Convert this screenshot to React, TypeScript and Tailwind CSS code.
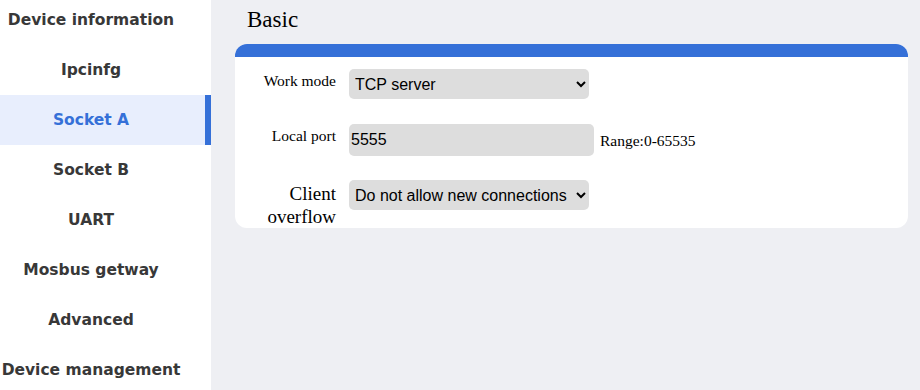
import { useState } from "react";

const menu = [
  "Device information",
  "Ipcinfg",
  "Socket A",
  "Socket B",
  "UART",
  "Mosbus getway",
  "Advanced",
  "Device management",
];

export default function App() {
  const [active, setActive] = useState("Socket A");

  return (
    <div className="flex h-[390px] w-[920px] overflow-hidden bg-[#eeeff3]">
      <aside className="w-[211px] shrink-0 bg-white">
        <ul className="-mt-[5px]">
          {menu.map((item) => (
            <li
              key={item}
              onClick={() => setActive(item)}
              className={
                item === active
                  ? "flex h-[50px] cursor-pointer items-center justify-center whitespace-nowrap border-r-[6px] border-[#3570d8] bg-[#e8eefd] pr-[23px] pt-[2px] font-['DejaVu_Sans',sans-serif] text-[15.5px] font-bold text-[#3570d8]"
                  : "flex h-[50px] cursor-pointer items-center justify-center whitespace-nowrap pr-[29px] pt-[2px] font-['DejaVu_Sans',sans-serif] text-[15.5px] font-bold text-[#383838]"
              }
            >
              {item}
            </li>
          ))}
        </ul>
      </aside>

      <main className="flex-1 pl-[24px] pr-[12px] font-['Liberation_Serif',serif]">
        <h2 className="pl-[12px] pt-[6px] text-[23px] leading-[28px] text-black">Basic</h2>
        <section className="mt-[10px] overflow-hidden rounded-[12px] bg-white">
          <div className="h-[13px] bg-[#3570d8]" />
          <div className="pt-[12px]">
            <div className="flex items-start">
              <label className="w-[101px] pt-[3px] text-right text-[15.5px] leading-[18px]">Work mode</label>
              <select className="ml-[13px] h-[30px] w-[240px] rounded-[5px] bg-[#dddddd] px-[2px] font-['Liberation_Sans',sans-serif] text-[16px] text-black outline-none">
                <option>TCP server</option>
                <option>TCP client</option>
                <option>UDP</option>
              </select>
            </div>

            <div className="mt-[25px] flex items-start">
              <label className="w-[101px] pt-[3px] text-right text-[15.5px] leading-[18px]">Local port</label>
              <input
                defaultValue="5555"
                className="ml-[13px] h-[32px] w-[245px] rounded-[5px] bg-[#dddddd] px-[2px] font-['Liberation_Sans',sans-serif] text-[16px] text-black outline-none"
              />
              <span className="ml-[6px] pt-[8px] text-[15.5px] leading-[18px]">Range:0-65535</span>
            </div>

            <div className="mt-[24px] flex items-start">
              <label className="w-[101px] pt-[2px] text-right text-[19px] leading-[23px]">
                Client
                <br />
                overflow
              </label>
              <select className="ml-[13px] h-[30px] w-[240px] rounded-[5px] bg-[#dddddd] px-[2px] font-['Liberation_Sans',sans-serif] text-[16px] text-black outline-none">
                <option>Do not allow new connections</option>
                <option>Close oldest connection</option>
              </select>
            </div>
          </div>
        </section>
      </main>
    </div>
  );
}
